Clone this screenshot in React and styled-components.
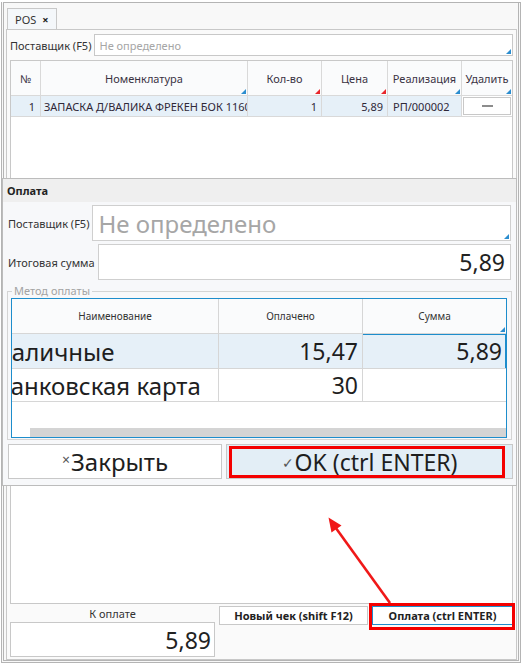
import React from 'react';
import styled, { createGlobalStyle } from 'styled-components';

const Global = createGlobalStyle`
  html, body { margin: 0; padding: 0; background: #fff; }
  body {
    width: 522px; height: 664px; overflow: hidden;
    font-family: "Noto Sans", "Open Sans", sans-serif;
    color: #333;
  }
  *, *::before, *::after { box-sizing: border-box; }
`;

const Frame = styled.div`
  position: relative;
  width: 522px;
  height: 664px;
  padding: 2px 1px 1px 1px;
  display: flex;
`;

const Shell = styled.div`
  flex: 1;
  display: flex;
  flex-direction: column;
  border-top: 1px solid #b4b4b4;
  border-left: 3px double #b4b4b4;
  border-right: 3px double #b4b4b4;
  border-bottom: 3px double #b4b4b4;
  background: #f8f8f8;
  padding: 0 1px 0 2px;
`;

const TabBar = styled.div`
  height: 26px;
  padding: 5px 0 0 1px;
  display: flex;
`;

const Tab = styled.div`
  width: 50px;
  height: 21px;
  border: 1px solid #c8c8c8;
  border-bottom: none;
  background: #f4f7fa;
  display: flex;
  align-items: center;
  gap: 6px;
  padding-left: 7px;
  font-size: 11px;
  color: #333;
`;

const TabClose = styled.span`
  font-weight: 700;
  font-size: 11px;
  color: #222;
`;

const Panel = styled.div`
  flex: 1;
  display: flex;
  flex-direction: column;
  border: 1px solid #c8c8c8;
  background: #fafafa;
  padding: 4px 3px 2px 3px;
  min-height: 0;
`;

const FieldLine = styled.div`
  display: flex;
  align-items: center;
  gap: ${p => p.$gap || 4}px;
  height: ${p => p.$h}px;
  flex: none;
  margin-bottom: ${p => p.$mb || 0}px;
`;

const Label = styled.span`
  font-size: 11px;
  color: #333;
  white-space: nowrap;
`;

const InputBox = styled.div`
  position: relative;
  flex: 1;
  height: 100%;
  border: 1px solid ${p => p.$border || '#c8c8c8'};
  background: #fff;
  display: flex;
  align-items: center;
  justify-content: ${p => (p.$right ? 'flex-end' : 'flex-start')};
  padding: 0 ${p => p.$pad}px;
  font-size: ${p => p.$fs}px;
  color: ${p => (p.$placeholder ? '#a6a6a6' : '#222')};
  white-space: nowrap;
  overflow: hidden;
`;

const Corner = styled.span`
  position: absolute;
  right: 1px;
  bottom: 1px;
  width: 0;
  height: 0;
  border-left: 5px solid transparent;
  border-bottom: 5px solid ${p => (p.$red ? '#e8262b' : '#2b8dcf')};
`;

const Grid = styled.div`
  margin-top: 4px;
  flex: 1;
  display: flex;
  flex-direction: column;
  border: 1px solid #c8c8c8;
  background: #fff;
  min-height: 0;
`;

const GridRow = styled.div`
  display: grid;
  grid-template-columns: 30px 207px 74px 66px 74px 1fr;
  height: ${p => p.$h}px;
  flex: none;
`;

const HeadCell = styled.div`
  position: relative;
  display: flex;
  align-items: center;
  justify-content: center;
  border-right: ${p => (p.$last ? 'none' : '1px solid #d9d9d9')};
  border-bottom: 1px solid #d9d9d9;
  background: #fafbfc;
  font-size: 11px;
  color: #3a3344;
  white-space: nowrap;
`;

const Cell = styled.div`
  display: flex;
  align-items: center;
  justify-content: ${p => (p.$right ? 'flex-end' : 'flex-start')};
  padding: 0 ${p => p.$pr || 4}px 0 ${p => p.$pl || 4}px;
  border-right: ${p => (p.$last ? 'none' : '1px solid #d9d9d9')};
  border-bottom: 1px solid #d9d9d9;
  background: #e6f0f8;
  font-size: 11px;
  color: #2f2838;
  white-space: nowrap;
  overflow: hidden;
`;

const DeleteCell = styled.div`
  padding: 1px;
  border-bottom: 1px solid #d9d9d9;
  background: #fff;
  display: flex;
`;

const DeleteButton = styled.div`
  flex: 1;
  border: 1px solid #c8c8c8;
  background: #fff;
  display: flex;
  align-items: center;
  justify-content: center;
`;

const Dash = styled.span`
  width: 11px;
  height: 2px;
  background: #8c8c8c;
`;

const GridFill = styled.div`
  flex: 1;
`;

const Footer = styled.div`
  display: grid;
  grid-template-columns: 205px 149px 1fr;
  column-gap: 4px;
  height: 53px;
  flex: none;
`;

const SumBlock = styled.div`
  display: flex;
  flex-direction: column;
`;

const SumLabel = styled.div`
  height: 18px;
  display: flex;
  align-items: flex-end;
  justify-content: center;
  font-size: 11px;
  line-height: 15px;
  color: #333;
  padding-bottom: 1px;
`;

const SumBox = styled.div`
  height: 35px;
  border: 1px solid #c8c8c8;
  background: #fff;
  display: flex;
  align-items: center;
  justify-content: flex-end;
  padding-right: 3px;
  font-size: 23px;
  color: #222;
`;

const Marked = styled.div`
  position: relative;
  &::after {
    content: "";
    position: absolute;
    top: ${p => p.$t}px;
    right: ${p => p.$r}px;
    bottom: ${p => p.$b}px;
    left: ${p => p.$l}px;
    border: 3px solid #f40000;
    pointer-events: none;
  }
`;

const FooterButton = styled.div`
  margin-top: 2px;
  height: 19px;
  border: 1px solid ${p => (p.$focused ? '#1f8ccc' : '#c8c8c8')};
  background: #fff;
  display: flex;
  align-items: center;
  justify-content: center;
  font-size: 11px;
  font-weight: 700;
  color: #222;
  white-space: nowrap;
`;

const Dialog = styled.div`
  position: absolute;
  left: 2px;
  top: 178px;
  width: 515px;
  height: 308px;
  border: 1px solid #bcbcbc;
  background: #f7f8fa;
  display: flex;
  flex-direction: column;
  z-index: 2;
`;

const DialogHeader = styled.div`
  height: 23px;
  flex: none;
  background: #efefef;
  display: flex;
  align-items: center;
  padding-left: 4px;
  font-size: 11px;
  font-weight: 700;
  color: #222;
`;

const DialogBody = styled.div`
  flex: 1;
  display: flex;
  flex-direction: column;
  padding: 3px 5px 6px 5px;
`;

const Fieldset = styled.fieldset`
  margin: 4px -1px 0 -1px;
  padding: 0 4px 1px 3px;
  border: 1px solid #d4d4d4;
  min-width: 0;
`;

const Legend = styled.legend`
  margin-left: 1px;
  padding: 0 2px;
  font-size: 11px;
  line-height: 14px;
  color: #a3a3a3;
`;

const PayTable = styled.div`
  height: 140px;
  border: 1px solid #1d8dcc;
  background: #fff;
  display: flex;
  flex-direction: column;
`;

const PayRow = styled.div`
  display: grid;
  grid-template-columns: 207px 144px 1fr;
  height: ${p => p.$h}px;
  flex: none;
  background: ${p => (p.$selected ? '#e6f0f8' : '#fff')};
`;

const PayHead = styled.div`
  position: relative;
  display: flex;
  align-items: center;
  justify-content: center;
  border-right: ${p => (p.$last ? 'none' : '1px solid #d6d6d6')};
  border-bottom: 1px solid #d6d6d6;
  background: #fafbfc;
  font-size: 10px;
  color: #333;
`;

const PayCell = styled.div`
  position: relative;
  display: flex;
  align-items: center;
  justify-content: ${p => (p.$right ? 'flex-end' : 'flex-start')};
  padding: 0 ${p => (p.$right ? 4 : 0)}px 0 0;
  border-right: ${p => (p.$last ? 'none' : '1px solid #d6d6d6')};
  border-bottom: 1px solid #d6d6d6;
  font-size: ${p => (p.$right ? 23 : 24)}px;
  color: #1e1e1e;
  white-space: nowrap;
  overflow: hidden;
  ${p =>
    p.$current &&
    `&::after {
      content: "";
      position: absolute;
      top: 0; left: -1px; right: 0; bottom: -1px;
      border: 1px solid #1d8dcc;
    }`}
`;

const Clipped = styled.span`
  margin-left: ${p => p.$shift}px;
`;

const PayFill = styled.div`
  flex: 1;
`;

const ScrollTrack = styled.div`
  height: 9px;
  flex: none;
  background: #fff;
  padding-left: 18px;
  display: flex;
`;

const ScrollThumb = styled.div`
  flex: 1;
  background: #d4d4d4;
`;

const DialogButtons = styled.div`
  margin: 4px -2px 0 0;
  display: grid;
  grid-template-columns: 214px 1fr;
  column-gap: 4px;
  height: 35px;
  flex: none;
`;

const DialogButton = styled.div`
  height: 35px;
  border: 1px solid #c8c8c8;
  background: ${p => (p.$primary ? '#e3eef6' : '#fff')};
  display: flex;
  align-items: center;
  justify-content: center;
  font-size: ${p => (p.$primary ? 23 : 24)}px;
  color: #1e1e1e;
  white-space: nowrap;
`;

const ButtonGlyph = styled.span`
  font-size: 14px;
  color: #555;
  margin-right: 1px;
  position: relative;
  top: ${p => p.$dy}px;
`;

const ArrowLayer = styled.svg`
  position: absolute;
  left: 0;
  top: 0;
  width: 522px;
  height: 664px;
  pointer-events: none;
  z-index: 3;
`;

export default function App() {
  return (
    <>
      <Global />
      <Frame>
        <Shell>
          <TabBar>
            <Tab>
              POS <TabClose>×</TabClose>
            </Tab>
          </TabBar>
          <Panel>
            <FieldLine $h={22} $gap={3}>
              <Label>Поставщик (F5)</Label>
              <InputBox $fs={11} $pad={4} $placeholder>
                Не определено
                <Corner />
              </InputBox>
            </FieldLine>
            <Grid>
              <GridRow $h={35}>
                <HeadCell>№</HeadCell>
                <HeadCell>
                  Номенклатура
                  <Corner />
                </HeadCell>
                <HeadCell>
                  Кол-во
                  <Corner $red />
                </HeadCell>
                <HeadCell>
                  Цена
                  <Corner $red />
                </HeadCell>
                <HeadCell>
                  Реализация
                  <Corner />
                </HeadCell>
                <HeadCell $last>
                  Удалить
                  <Corner />
                </HeadCell>
              </GridRow>
              <GridRow $h={21}>
                <Cell $right $pr={5}>1</Cell>
                <Cell $pl={3}>ЗАПАСКА Д/ВАЛИКА ФРЕКЕН БОК 1160030</Cell>
                <Cell $right $pr={4}>1</Cell>
                <Cell $right $pr={4}>5,89</Cell>
                <Cell $pl={5}>РП/000002</Cell>
                <DeleteCell>
                  <DeleteButton>
                    <Dash />
                  </DeleteButton>
                </DeleteCell>
              </GridRow>
              <GridFill />
            </Grid>
            <Footer>
              <SumBlock>
                <SumLabel>К оплате</SumLabel>
                <SumBox>5,89</SumBox>
              </SumBlock>
              <div>
                <FooterButton>Новый чек (shift F12)</FooterButton>
              </div>
              <Marked $t={-1} $r={-2} $b={27} $l={-3}>
                <FooterButton $focused>Оплата (ctrl ENTER)</FooterButton>
              </Marked>
            </Footer>
          </Panel>
        </Shell>

        <Dialog>
          <DialogHeader>Оплата</DialogHeader>
          <DialogBody>
            <FieldLine $h={36} $gap={3} $mb={3}>
              <Label>Поставщик (F5)</Label>
              <InputBox $fs={24} $pad={5} $border="#cfcfcf" $placeholder>
                Не определено
                <Corner />
              </InputBox>
            </FieldLine>
            <FieldLine $h={36} $gap={3}>
              <Label>Итоговая сумма</Label>
              <InputBox $fs={23} $pad={5} $border="#cfcfcf" $right>
                5,89
              </InputBox>
            </FieldLine>
            <Fieldset>
              <Legend>Метод оплаты</Legend>
              <PayTable>
                <PayRow $h={35}>
                  <PayHead>Наименование</PayHead>
                  <PayHead>Оплачено</PayHead>
                  <PayHead $last>
                    Сумма
                    <Corner />
                  </PayHead>
                </PayRow>
                <PayRow $h={35} $selected>
                  <PayCell>
                    <Clipped $shift={-18}>Наличные</Clipped>
                  </PayCell>
                  <PayCell $right>15,47</PayCell>
                  <PayCell $right $last $current>5,89</PayCell>
                </PayRow>
                <PayRow $h={33}>
                  <PayCell>
                    <Clipped $shift={-16}>Банковская карта</Clipped>
                  </PayCell>
                  <PayCell $right>30</PayCell>
                  <PayCell $last />
                </PayRow>
                <PayFill />
                <ScrollTrack>
                  <ScrollThumb />
                </ScrollTrack>
              </PayTable>
            </Fieldset>
            <DialogButtons>
              <DialogButton>
                <ButtonGlyph $dy={-2}>×</ButtonGlyph>Закрыть
              </DialogButton>
              <Marked $t={2} $r={8} $b={1} $l={3}>
                <DialogButton $primary>
                  <ButtonGlyph $dy={1}>✓</ButtonGlyph>OK (ctrl ENTER)
                </DialogButton>
              </Marked>
            </DialogButtons>
          </DialogBody>
        </Dialog>

        <ArrowLayer viewBox="0 0 522 664">
          <line x1="390" y1="603" x2="335.5" y2="527.5" stroke="#f01818" strokeWidth="2.6" />
          <polygon points="328.5,517.5 341.5,525.5 331.5,532.5" fill="#f01818" />
        </ArrowLayer>
      </Frame>
    </>
  );
}
